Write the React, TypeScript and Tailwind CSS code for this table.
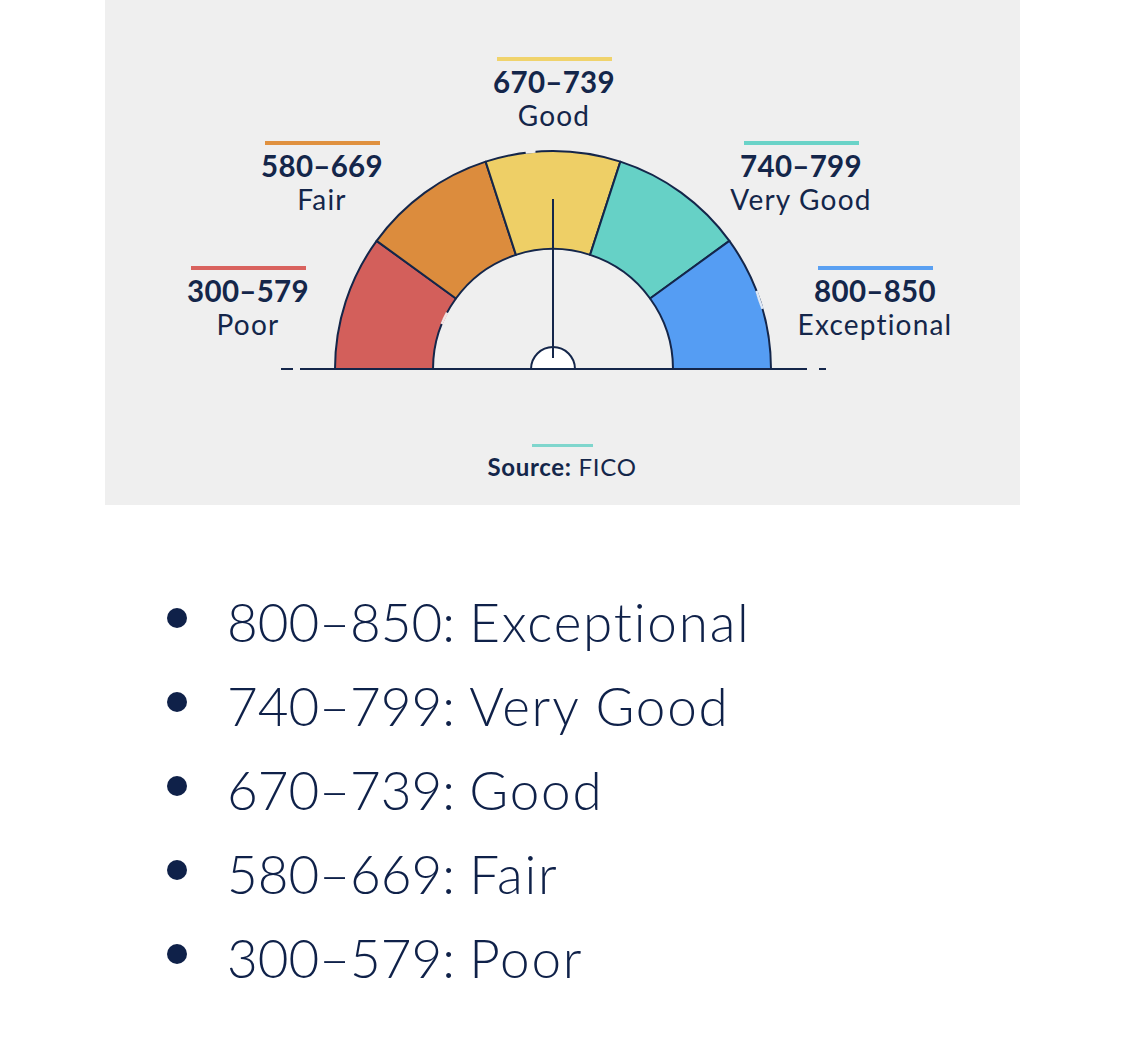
import React from "react";

const NAVY = "#14264a";
const CX = 448;
const CY = 369;
const R = 218;
const r = 120;

const segColors = ["#d35f5b", "#dc8c3d", "#eecf66", "#66d1c6", "#559df3"];

function pt(rad: number, deg: number) {
  const a = (deg * Math.PI) / 180;
  return [CX + rad * Math.cos(a), CY - rad * Math.sin(a)];
}

function segPath(i: number) {
  const a0 = 180 - 36 * i;
  const a1 = 180 - 36 * (i + 1);
  const [x0, y0] = pt(R, a0);
  const [x1, y1] = pt(R, a1);
  const [x2, y2] = pt(r, a1);
  const [x3, y3] = pt(r, a0);
  return `M ${x0} ${y0} A ${R} ${R} 0 0 1 ${x1} ${y1} L ${x2} ${y2} A ${r} ${r} 0 0 0 ${x3} ${y3} Z`;
}

type Lbl = { x: number; y: number; color: string; range: string; name: string };

const labels: Lbl[] = [
  { x: 143, y: 268, color: "#d9625e", range: "300–579", name: "Poor" },
  { x: 217, y: 143, color: "#e0913f", range: "580–669", name: "Fair" },
  { x: 449, y: 59, color: "#f0d36c", range: "670–739", name: "Good" },
  { x: 696, y: 143, color: "#6ad3c8", range: "740–799", name: "Very Good" },
  { x: 770, y: 268, color: "#5aa0f2", range: "800–850", name: "Exceptional" },
];

function Gauge() {
  return (
    <svg width="915" height="505" viewBox="0 0 915 505" className="block [font-variant-ligatures:none]">
      {segColors.map((c, i) => (
        <path key={i} d={segPath(i)} fill={c} stroke={NAVY} strokeWidth={2} strokeLinejoin="round" />
      ))}
      {/* small gaps in outline */}
      <path d={`M ${pt(R + 0.5, 97.2)[0]} ${pt(R + 0.5, 97.2)[1]} A ${R} ${R} 0 0 1 ${pt(R + 0.5, 94.6)[0]} ${pt(R + 0.5, 94.6)[1]}`} stroke="#efefef" strokeWidth={3} fill="none" />
      <path d={`M ${pt(r, 158)[0]} ${pt(r, 158)[1]} A ${r} ${r} 0 0 1 ${pt(r, 152)[0]} ${pt(r, 152)[1]}`} stroke="#f6e3e2" strokeWidth={2.5} fill="none" />
      <path d={`M ${pt(R, 21)[0]} ${pt(R, 21)[1]} A ${R} ${R} 0 0 0 ${pt(R, 16)[0]} ${pt(R, 16)[1]}`} stroke="#dde8f7" strokeWidth={2.5} fill="none" />
      {/* baseline */}
      <line x1={195} y1={CY} x2={702} y2={CY} stroke={NAVY} strokeWidth={2} />
      <line x1={176} y1={CY} x2={188} y2={CY} stroke={NAVY} strokeWidth={2} />
      <line x1={714} y1={CY} x2={721} y2={CY} stroke={NAVY} strokeWidth={2} />
      {/* needle */}
      <line x1={CX} y1={199} x2={CX} y2={358} stroke={NAVY} strokeWidth={2} />
      <path d={`M ${CX - 22} ${CY} A 22 22 0 0 1 ${CX + 22} ${CY} Z`} fill="#ffffff" stroke={NAVY} strokeWidth={2} />
      <line x1={CX} y1={345} x2={CX} y2={358} stroke={NAVY} strokeWidth={2} />
      {/* labels */}
      {labels.map((l) => (
        <g key={l.range}>
          <rect x={l.x - 57} y={l.y - 2} width={115} height={4} fill={l.color} />
          <text x={l.x} y={l.y + 34} textAnchor="middle" fontFamily="Lato, 'Noto Sans', sans-serif" fontWeight={700} fontSize={29.5} letterSpacing={0.3} fill={NAVY}>
            {l.range}
          </text>
          <text x={l.x} y={l.y + 67} textAnchor="middle" fontFamily="Lato, 'Noto Sans', sans-serif" fontWeight={400} fontSize={28} letterSpacing={1.2} fill={NAVY}>
            {l.name}
          </text>
        </g>
      ))}
      <rect x={427} y={444} width={61} height={3} fill="#7fd6cd" />
      <text x={457} y={476} textAnchor="middle" fontFamily="Lato, 'Noto Sans', sans-serif" fontSize={24} letterSpacing={0.7} fill={NAVY}>
        <tspan fontWeight={700}>Source:</tspan>
        <tspan fontWeight={400}> FICO</tspan>
      </text>
    </svg>
  );
}

const items = [
  { n: "800–850:", w: "Exceptional" },
  { n: "740–799:", w: "Very Good" },
  { n: "670–739:", w: "Good" },
  { n: "580–669:", w: "Fair" },
  { n: "300–579:", w: "Poor" },
];

export default function App() {
  return (
    <div className="w-[1125px] h-[1056px] bg-white overflow-hidden">
      <div className="ml-[105px] w-[915px] h-[505px] bg-[#efefef]">
        <Gauge />
      </div>
      <ul className="mt-[74px] ml-[167px] flex flex-col">
        {items.map((t) => (
          <li key={t.n} className="flex items-center h-[84px]">
            <span className="w-[20px] h-[20px] rounded-full bg-[#0f2149] shrink-0 mt-[-6px]" />
            <span className="ml-[40px] font-['Lato'] font-light text-[53px] leading-none text-[#0f2149] [font-variant-ligatures:none] whitespace-pre">
              <span className="tracking-[0px]">{t.n} </span>
              <span className="tracking-[1.8px]">{t.w}</span>
            </span>
          </li>
        ))}
      </ul>
    </div>
  );
}
